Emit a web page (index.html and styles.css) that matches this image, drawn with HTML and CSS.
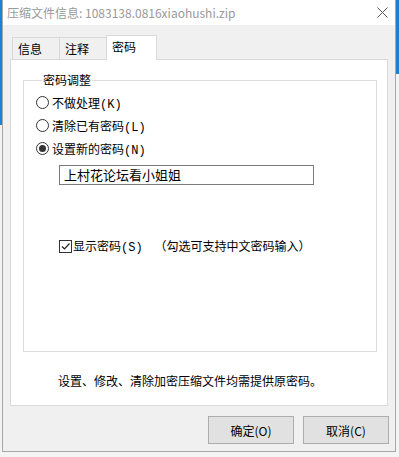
FILE: index.html
```html
<!DOCTYPE html>
<html lang="zh-CN">
<head>
    <meta charset="UTF-8">
    <title>压缩文件信息</title>
    <link rel="stylesheet" href="styles.css">
</head>
<body>
    <div class="window">
        <!-- Title bar -->
        <div class="titlebar">
            <span class="title">压缩文件信息: 1083138.0816xiaohushi.zip</span>
            <svg class="close" width="11" height="11" viewBox="0 0 11 11">
                <path d="M0.5 0.5 L10.5 10.5 M10.5 0.5 L0.5 10.5" stroke="#555" stroke-width="1" fill="none"/>
            </svg>
        </div>

        <div class="client">
            <!-- Tabs -->
            <div class="tabs">
                <div class="tab">信息</div>
                <div class="tab">注释</div>
                <div class="tab active">密码</div>
            </div>

            <!-- Tab page -->
            <div class="page">
                <fieldset class="group">
                    <legend>密码调整</legend>

                    <label class="radio-row">
                        <span class="radio"></span>不做处理(K)
                    </label>
                    <label class="radio-row">
                        <span class="radio"></span>清除已有密码(L)
                    </label>
                    <label class="radio-row">
                        <span class="radio checked"></span>设置新的密码(N)
                    </label>

                    <div class="password-box">上村花论坛看小姐姐</div>

                    <label class="check-row">
                        <span class="checkbox">
                            <svg width="11" height="11" viewBox="0 0 11 11">
                                <path d="M2 5.5 L4.5 8 L9.5 2.5" stroke="#222" stroke-width="1.2" fill="none"/>
                            </svg>
                        </span>显示密码(S)<span class="hint">（勾选可支持中文密码输入）</span>
                    </label>
                </fieldset>

                <p class="note">设置、修改、清除加密压缩文件均需提供原密码。</p>
            </div>

            <!-- Buttons -->
            <div class="buttons">
                <button class="btn">确定(O)</button>
                <button class="btn">取消(C)</button>
            </div>
        </div>
    </div>
</body>
</html>
```

FILE: styles.css
```css
* {
    margin: 0;
    padding: 0;
    box-sizing: border-box;
}

body {
    width: 399px;
    height: 457px;
    overflow: hidden;
    font-family: "Noto Sans CJK SC", sans-serif;
    font-size: 12px;
    color: #000;
    background:
        linear-gradient(#1c82d6, #1c82d6) 0 0 / 2px 125px no-repeat,
        linear-gradient(#1a7fd3, #1a7fd3) 396px 0 / 3px 74px no-repeat,
        #f4f4f4;
}

.window {
    margin-left: 2px;
    width: 394px;
    height: 452px;
    border: 1px solid #a8a8a8;
    border-top: none;
    background-color: #f0f0f0;
    display: flex;
    flex-direction: column;
}

.titlebar {
    height: 25px;
    background-color: #fff;
    display: flex;
    align-items: center;
    padding: 0 7px 1px 4px;
}

.title {
    color: #999;
    font-size: 12px;
    flex: 1;
}

.client {
    flex: 1;
    display: flex;
    flex-direction: column;
    padding: 10px 7px 0 7px;
}

.tabs {
    display: flex;
    align-items: flex-end;
    height: 24px;
    padding-left: 2px;
    position: relative;
    z-index: 1;
}

.tab {
    height: 22px;
    width: 48px;
    border: 1px solid #d9d9d9;
    border-bottom: none;
    padding: 3px 0 0 5px;
    line-height: 16px;
    background-color: #f0f0f0;
}

.tab + .tab {
    margin-left: -1px;
}

.tab.active {
    height: 25px;
    width: 51px;
    margin-bottom: -1px;
    background-color: #fff;
    padding-top: 3px;
}

.page {
    height: 347px;
    background-color: #fff;
    border: 1px solid #d9d9d9;
    padding: 13px 10px 0 12px;
}

.group {
    height: 279px;
    border: 1px solid #dcdcdc;
    padding: 4px 0 0 12px;
    display: flex;
    flex-direction: column;
}

.group legend {
    margin-left: 6px;
    padding: 0 1px;
    line-height: 14px;
}

.radio-row {
    display: flex;
    align-items: center;
    height: 23px;
    gap: 3px;
    font-family: "Liberation Mono", "Noto Sans CJK SC", monospace;
}

.radio {
    width: 13px;
    height: 13px;
    border: 1px solid #333;
    border-radius: 50%;
    display: flex;
    align-items: center;
    justify-content: center;
}

.radio.checked::after {
    content: "";
    width: 7px;
    height: 7px;
    border-radius: 50%;
    background-color: #333;
}

.password-box {
    margin: 5px 0 0 23px;
    width: 255px;
    height: 20px;
    border: 1px solid #7a7a7a;
    padding: 0 4px;
    line-height: 18px;
    font-size: 13px;
}

.check-row {
    display: flex;
    align-items: center;
    margin: 52px 0 0 23px;
    font-family: "Liberation Mono", "Noto Sans CJK SC", monospace;
}

.checkbox {
    width: 13px;
    height: 13px;
    border: 1px solid #333;
    margin-right: 1px;
    display: flex;
    align-items: center;
    justify-content: center;
}

.hint {
    margin-left: 12px;
}

.note {
    margin: 22px 0 0 35px;
    line-height: 14px;
}

.buttons {
    display: flex;
    justify-content: flex-end;
    gap: 9px;
    margin-top: 10px;
    margin-right: -1px;
}

.btn {
    width: 86px;
    height: 28px;
    background-color: #e1e1e1;
    border: 1px solid #adadad;
    font-family: "Noto Sans CJK SC", sans-serif;
    font-size: 12px;
    color: #000;
}
```
